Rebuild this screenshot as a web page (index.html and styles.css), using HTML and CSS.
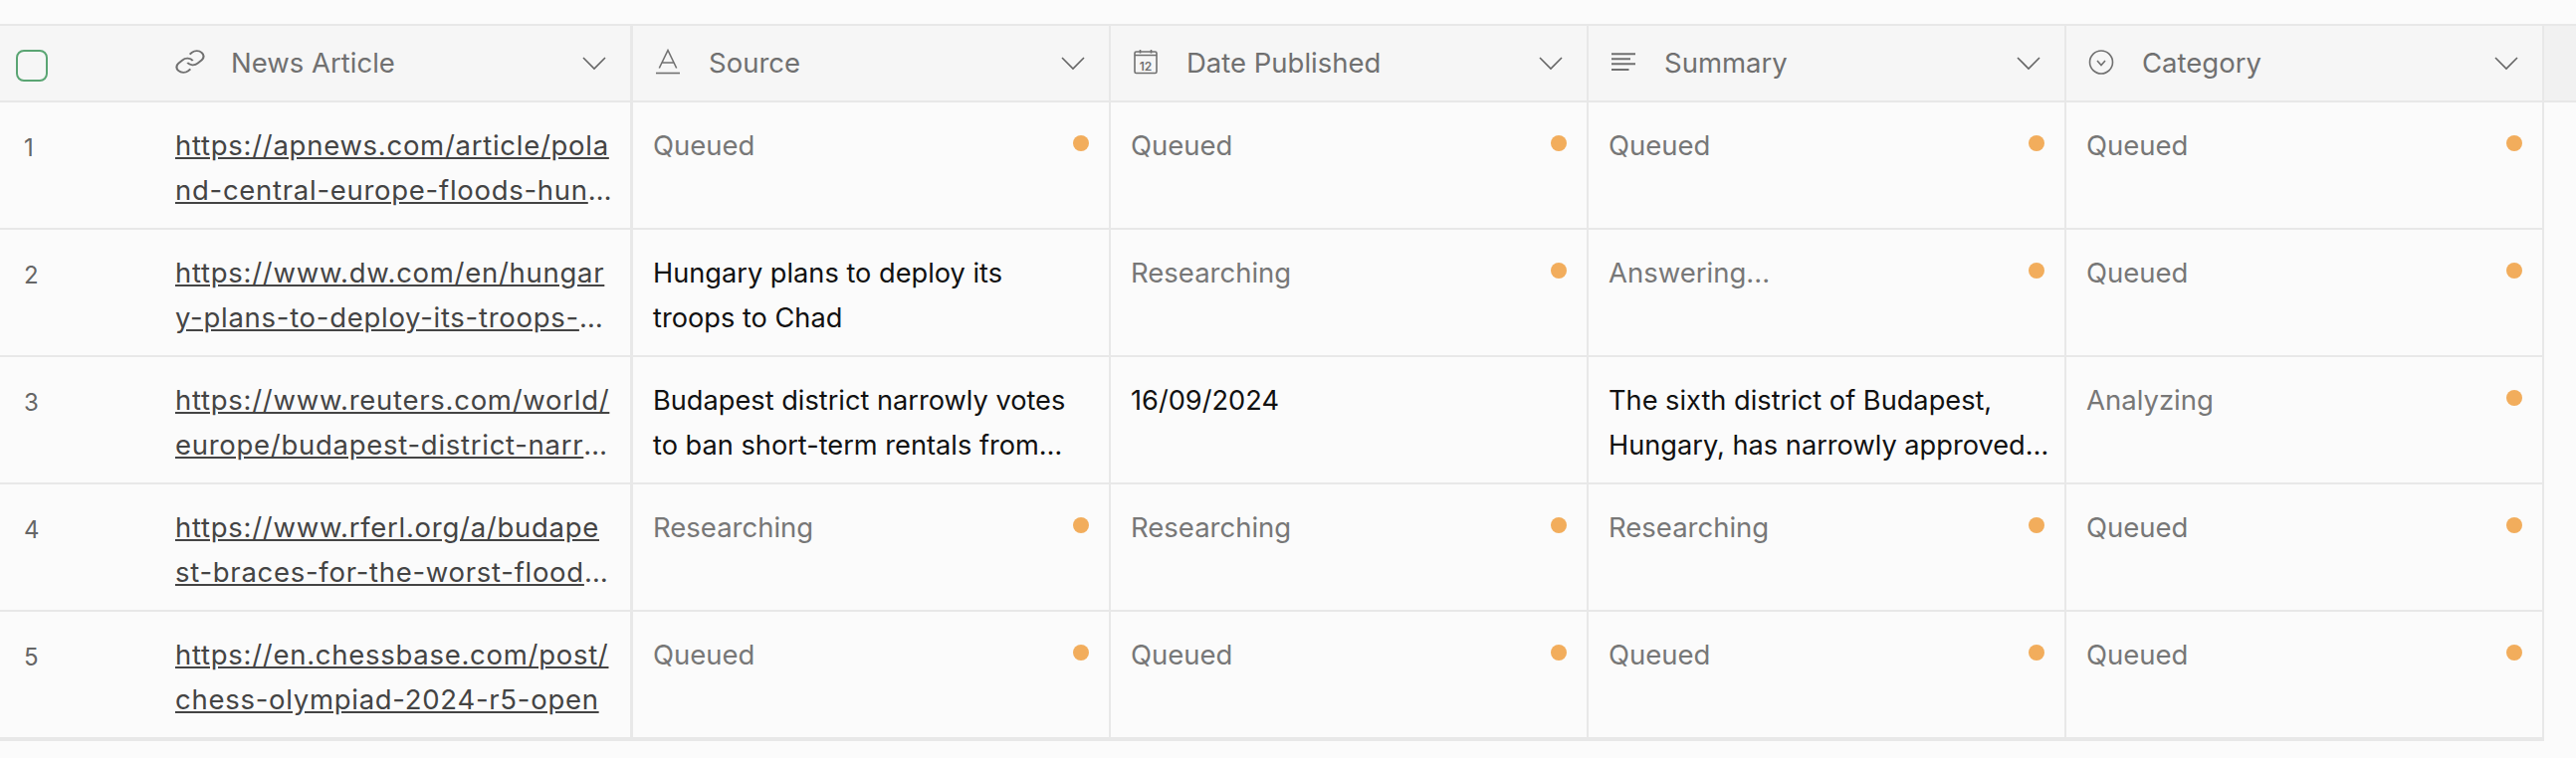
FILE: index.html
```html
<!DOCTYPE html>
<html lang="en">
<head>
    <meta charset="UTF-8">
    <title>News Articles</title>
    <link rel="stylesheet" href="styles.css">
</head>
<body>
<div class="table">
    <div class="row head">
        <div class="cell num"><span class="checkbox"></span></div>
        <div class="cell col first">
            <svg class="icon wide" viewBox="1 1 22 22" preserveAspectRatio="none"><path d="M10 13a5 5 0 0 0 7.54.54l3-3a5 5 0 0 0-7.07-7.07l-1.72 1.71"/><path d="M14 11a5 5 0 0 0-7.54-.54l-3 3a5 5 0 0 0 7.07 7.07l1.71-1.71"/></svg>
            <span class="title">News Article</span>
            <svg class="chevron" viewBox="0 0 24 14"><path d="M1 1 12 12 23 1"/></svg>
        </div>
        <div class="cell col">
            <svg class="icon" viewBox="0 0 24 24"><path d="M3.300 18.500 12 .5l8.700 18M6 13h12"/><path d="M0 23.500h24"/></svg>
            <span class="title">Source</span>
            <svg class="chevron" viewBox="0 0 24 14"><path d="M1 1 12 12 23 1"/></svg>
        </div>
        <div class="cell col">
            <svg class="icon" viewBox="0 0 24 24"><rect x="1" y="2" width="22" height="21.500" rx="1.500"/><path d="M1 5.500h22M6.500 0v3.500M17.500 0v3.500"/><text class="cal-day" x="12" y="20.500" text-anchor="middle">12</text></svg>
            <span class="title">Date Published</span>
            <svg class="chevron" viewBox="0 0 24 14"><path d="M1 1 12 12 23 1"/></svg>
        </div>
        <div class="cell col">
            <svg class="icon thick" viewBox="0 0 24 24"><path d="M0 4.300h24M0 9.300h19M0 14.300h24M0 20h17.500"/></svg>
            <span class="title">Summary</span>
            <svg class="chevron" viewBox="0 0 24 14"><path d="M1 1 12 12 23 1"/></svg>
        </div>
        <div class="cell col">
            <svg class="icon" viewBox="0 0 24 24"><circle cx="12" cy="12.500" r="11.500"/><path d="M8 11l4 4.500 4-4.500"/></svg>
            <span class="title">Category</span>
            <svg class="chevron" viewBox="0 0 24 14"><path d="M1 1 12 12 23 1"/></svg>
        </div>
        <div class="cell add"></div>
    </div>

    <div class="row">
        <div class="cell num">1</div>
        <div class="cell first"><a class="link" href="#">https://apnews.com/article/pola<br>nd-central-europe-floods-hun</a>…</div>
        <div class="cell status"><span>Queued</span><i class="dot"></i></div>
        <div class="cell status"><span>Queued</span><i class="dot"></i></div>
        <div class="cell status"><span>Queued</span><i class="dot"></i></div>
        <div class="cell status"><span>Queued</span><i class="dot"></i></div>
    </div>
    <div class="row">
        <div class="cell num">2</div>
        <div class="cell first"><a class="link" href="#">https://www.dw.com/en/hungar<br>y-plans-to-deploy-its-troops-</a>…</div>
        <div class="cell">Hungary plans to deploy its<br>troops to Chad</div>
        <div class="cell status"><span>Researching</span><i class="dot"></i></div>
        <div class="cell status"><span>Answering...</span><i class="dot"></i></div>
        <div class="cell status"><span>Queued</span><i class="dot"></i></div>
    </div>
    <div class="row">
        <div class="cell num">3</div>
        <div class="cell first"><a class="link" href="#">https://www.reuters.com/world/<br>europe/budapest-district-narr</a>…</div>
        <div class="cell">Budapest district narrowly votes<br>to ban short-term rentals from…</div>
        <div class="cell">16/09/2024</div>
        <div class="cell">The sixth district of Budapest,<br>Hungary, has narrowly approved…</div>
        <div class="cell status"><span>Analyzing</span><i class="dot"></i></div>
    </div>
    <div class="row">
        <div class="cell num">4</div>
        <div class="cell first"><a class="link" href="#">https://www.rferl.org/a/budape<br>st-braces-for-the-worst-flood</a>…</div>
        <div class="cell status"><span>Researching</span><i class="dot"></i></div>
        <div class="cell status"><span>Researching</span><i class="dot"></i></div>
        <div class="cell status"><span>Researching</span><i class="dot"></i></div>
        <div class="cell status"><span>Queued</span><i class="dot"></i></div>
    </div>
    <div class="row last">
        <div class="cell num">5</div>
        <div class="cell first"><a class="link" href="#">https://en.chessbase.com/post/<br>chess-olympiad-2024-r5-open</a></div>
        <div class="cell status"><span>Queued</span><i class="dot"></i></div>
        <div class="cell status"><span>Queued</span><i class="dot"></i></div>
        <div class="cell status"><span>Queued</span><i class="dot"></i></div>
        <div class="cell status"><span>Queued</span><i class="dot"></i></div>
    </div>
</div>
</body>
</html>
```

FILE: styles.css
```css
body {
    margin: 0;
    padding-top: 24px;
    background-color: #fbfbfb;
    font-family: "Inter", "Liberation Sans", sans-serif;
    font-size: 27.2px;
    color: #111;
    overflow: hidden;
}
.table {
    border-top: 2px solid #e8e8e8;
}
.row {
    display: grid;
    grid-template-columns: 176px 460px repeat(4, 480px);
    height: 128px;
    box-sizing: border-box;
}
.row.head {
    grid-template-columns: 176px 460px repeat(4, 480px) 1fr;
    height: 77px;
    background-color: #f6f6f6;
    border-bottom: 2px solid #e8e8e8;
}
.row:not(.head) {
    width: 2556px;
    border-bottom: 2px solid #e8e8e8;
}
.row.last {
    height: 130px;
    border-bottom-width: 4px;
}
.cell {
    box-sizing: border-box;
    padding: 21px 16px 0 20px;
    border-right: 2px solid #e8e8e8;
    line-height: 45px;
    white-space: nowrap;
}
.cell.num {
    padding: 23px 0 0 24px;
    border-right: none;
    font-size: 24px;
    color: #666;
}
.cell.first {
    padding-left: 0;
    padding-right: 16px;
    border-right-width: 3px;
    color: #444;
    font-size: 27.5px;
}
.row.head .cell.num {
    padding: 24px 0 0 16px;
}
.checkbox {
    display: block;
    width: 32px;
    height: 32px;
    box-sizing: border-box;
    border: 2px solid #5aa573;
    border-radius: 8px;
}
.cell.col {
    display: flex;
    align-items: center;
    padding: 0 24px 0 23px;
    color: #707070;
    font-size: 27.5px;
}
.cell.col.first {
    padding-left: 0;
}
.cell.add {
    border-right: none;
    background-color: #f1f1f1;
}
.icon {
    flex: none;
    width: 24px;
    height: 24px;
    margin: 0 29px 4px 0;
    fill: none;
    stroke: #707070;
    stroke-width: 1.6;
    overflow: visible;
}
.icon.wide {
    width: 30px;
    margin-right: 26px;
}
.icon.thick {
    stroke-width: 2;
}
.cal-day {
    font-family: "Inter", sans-serif;
    font-size: 12px;
    font-weight: 600;
    fill: #707070;
    stroke: none;
}
.title {
    flex: 1;
}
.chevron {
    flex: none;
    width: 24px;
    height: 14px;
    fill: none;
    stroke: #666;
    stroke-width: 1.6;
}
.link {
    color: #444;
    letter-spacing: 0.72px;
}
.cell.status {
    display: flex;
    justify-content: space-between;
    align-items: flex-start;
    padding-right: 20px;
    color: #777;
    font-size: 27.5px;
}
.dot {
    flex: none;
    width: 16px;
    height: 16px;
    margin-top: 12px;
    border-radius: 50%;
    background-color: #f2ad5c;
}
```
